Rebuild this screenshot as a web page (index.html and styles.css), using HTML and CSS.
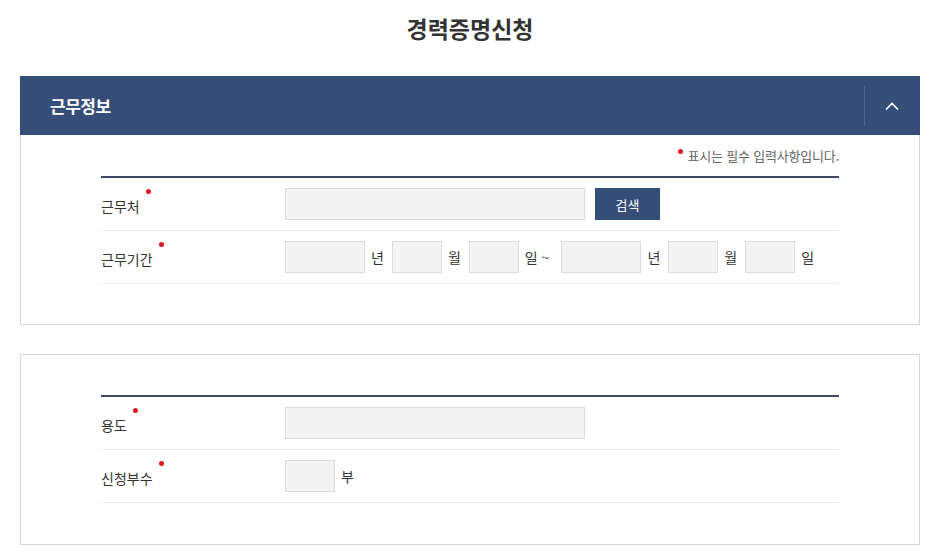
FILE: index.html
```html
<!DOCTYPE html>
<html lang="ko">
<head>
<meta charset="utf-8">
<title>경력증명신청</title>
<link rel="stylesheet" href="styles.css">
</head>
<body>
<div class="page">
  <h1 class="title">경력증명신청</h1>

  <section class="panel">
    <div class="panel-head">
      <h2 class="panel-title">근무정보</h2>
      <button class="toggle" type="button" aria-label="접기">
        <svg width="14" height="8" viewBox="0 0 14 8"><polyline points="1,7.5 7,1.5 13,7.5" fill="none" stroke="#fff" stroke-width="1.6"/></svg>
      </button>
    </div>
    <div class="panel-body">
      <p class="note"><span class="dot"></span>표시는 필수 입력사항입니다.</p>
      <div class="form">
        <div class="row">
          <div class="label">근무처<span class="dot"></span></div>
          <div class="field">
            <input class="input w300" type="text">
            <button class="btn" type="button">검색</button>
          </div>
        </div>
        <div class="row">
          <div class="label">근무기간<span class="dot"></span></div>
          <div class="field">
            <input class="input w80" type="text"><span class="unit">년</span>
            <input class="input w50" type="text"><span class="unit">월</span>
            <input class="input w50" type="text"><span class="unit wide">일 ~</span>
            <input class="input w80" type="text"><span class="unit">년</span>
            <input class="input w50" type="text"><span class="unit">월</span>
            <input class="input w50" type="text"><span class="unit">일</span>
          </div>
        </div>
      </div>
    </div>
  </section>

  <section class="panel plain">
    <div class="panel-body">
      <div class="form">
        <div class="row">
          <div class="label">용도<span class="dot"></span></div>
          <div class="field">
            <input class="input w300" type="text">
          </div>
        </div>
        <div class="row">
          <div class="label">신청부수<span class="dot"></span></div>
          <div class="field">
            <input class="input w50" type="text"><span class="unit">부</span>
          </div>
        </div>
      </div>
    </div>
  </section>
</div>
</body>
</html>
```

FILE: styles.css
```css
* { box-sizing: border-box; }

html, body {
  margin: 0;
  padding: 0;
  background: #fff;
}

body {
  font-family: "Noto Sans CJK KR", "Noto Sans", sans-serif;
  color: #333;
  font-size: 14px;
}

.page {
  width: 900px;
  margin-left: 20px;
}

.title {
  margin: 0 0 32px;
  padding-top: 12px;
  line-height: 32px;
  text-align: center;
  font-size: 23px;
  font-weight: 700;
  color: #333;
}

.panel {
  border: 1px solid #d6d6d6;
  border-top: 0;
}

.panel.plain {
  border-top: 1px solid #d6d6d6;
  margin-top: 29px;
}

.panel-head {
  display: flex;
  align-items: center;
  justify-content: space-between;
  height: 59px;
  margin: 0 -1px;
  background: #344d79;
  padding-left: 30px;
}

.panel-title {
  margin: 0;
  color: #fff;
  font-size: 17px;
  font-weight: 700;
  letter-spacing: -0.5px;
}

.toggle {
  display: flex;
  align-items: center;
  justify-content: center;
  width: 56px;
  height: 40px;
  padding: 0 2px 0 0;
  border: 0;
  border-left: 1px solid rgba(255, 255, 255, 0.14);
  background: transparent;
  cursor: pointer;
}

.panel-body {
  padding: 12px 80px 40px;
}

.panel.plain .panel-body {
  padding-top: 40px;
  padding-bottom: 41px;
}

.note {
  margin: 0 0 11px;
  height: 18px;
  line-height: 18px;
  text-align: right;
  font-size: 13px;
  color: #666;
  letter-spacing: -0.2px;
}

.note .dot {
  position: relative;
  top: -7px;
  margin-right: 5px;
}

.dot {
  display: inline-block;
  width: 5px;
  height: 5px;
  border-radius: 50%;
  background: #e3161c;
}

.form {
  border-top: 2px solid #3a4a66;
}

.row {
  display: flex;
  align-items: center;
  padding: 10px 0;
  border-bottom: 1px solid #ebebeb;
}

.label {
  width: 184px;
  flex: none;
  font-size: 14px;
  color: #333;
  line-height: 20px;
  padding-top: 3px;
}

.label .dot {
  position: relative;
  top: -7px;
  left: 6px;
  vertical-align: top;
}

.field {
  display: flex;
  align-items: center;
}

.input {
  height: 32px;
  padding: 0 8px;
  border: 1px solid #dcdcdc;
  background: #f4f4f4;
  font-family: inherit;
  font-size: 14px;
  outline: none;
}

.w300 { width: 300px; }
.w80 { width: 80px; }
.w50 { width: 50px; }

.unit {
  margin: 0 8px 0 6px;
  font-size: 14px;
  color: #333;
}

.unit.wide {
  margin-right: 12px;
}

.btn {
  margin-left: 10px;
  width: 65px;
  height: 32px;
  border: 0;
  background: #344d79;
  color: #fff;
  font-family: inherit;
  font-size: 13px;
  cursor: pointer;
}
```
